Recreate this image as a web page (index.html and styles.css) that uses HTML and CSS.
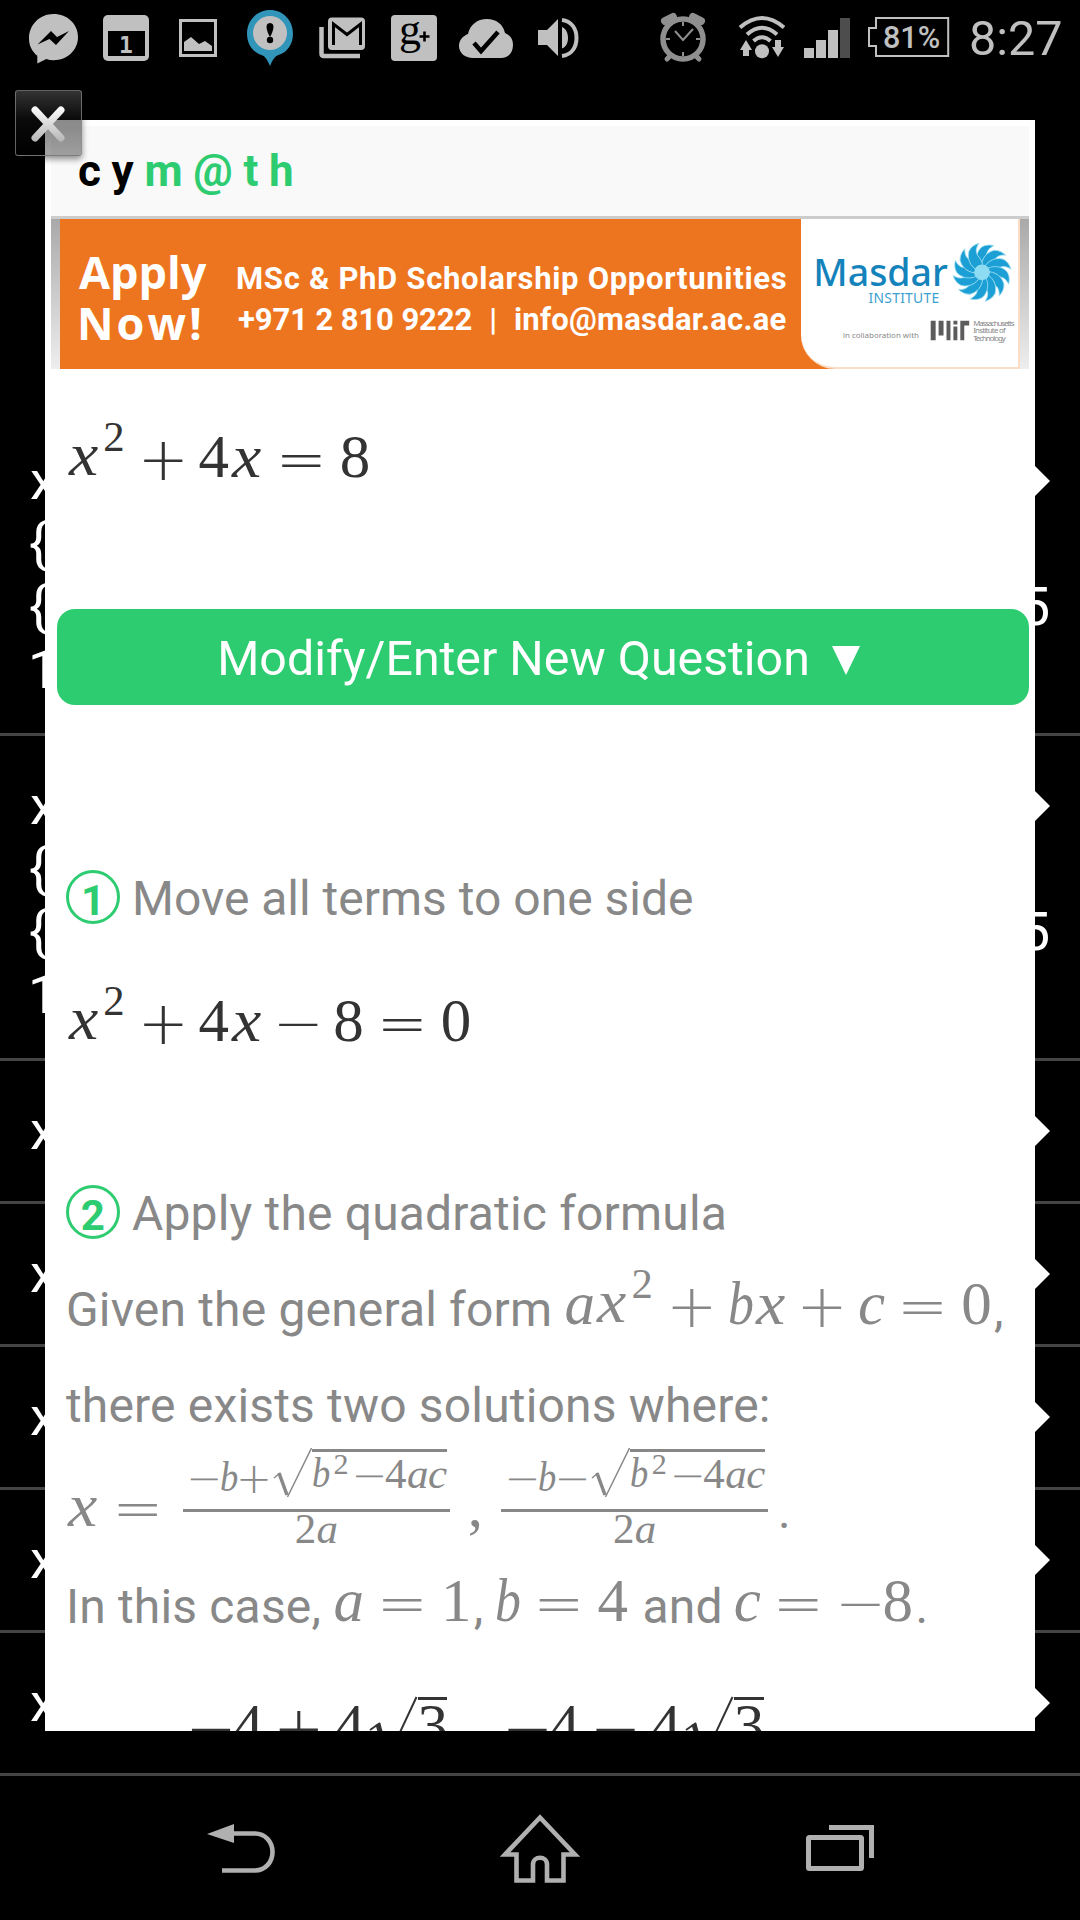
FILE: index.html
```html
<!DOCTYPE html>
<html lang="en">
<head>
    <meta charset="UTF-8">
    <meta name="viewport" content="width=device-width, initial-scale=1.0">
    <title>Cymath</title>
    <link rel="stylesheet" href="styles.css">
</head>
<body>
    <div class="status-bar">
        <div class="notifications">
            <svg viewBox="18 0 72 75"><path d="M53.500 14C39.500 14 29 25 29 38.500c0 7.500 3.200 13 8.300 17.300V63.500l9-4.500c2.300.800 4.700 1.200 7.200 1.200C67.500 60.200 78 50 78 37S67.500 14 53.500 14z" fill="#c0c0c0"/><path d="M37.500 44.500 51 31l6 6 12-6-13 14-6.500-6z" fill="#000"/></svg>
            <svg viewBox="90 0 72 75"><rect x="103" y="15" width="46" height="46" rx="5" fill="#c0c0c0"/><path d="M108 31h37v25h-37z" fill="#000"/><text x="126" y="53" class="cal-day">1</text></svg>
            <svg viewBox="162 0 72 75"><path d="M180.500 20.500h35v35h-35z" fill="none" stroke="#c0c0c0" stroke-width="3"/><path d="M184 51V42l7-5 8 7 6-3 7 5v5z" fill="#c0c0c0"/></svg>
            <svg viewBox="234 0 72 75"><path d="M270 10c-13 0-23 10.500-23 23.500 0 11 6 19 14.500 21.500 3 1 5 3 8.500 11 3.500-8 5.500-10 8.500-11 8.500-2.500 14.500-10.500 14.500-21.500C293 20.500 283 10 270 10z" fill="#3095b9"/><ellipse cx="270" cy="33" rx="17" ry="17" fill="#c0c0c0"/><path d="M270 23c-6 0-3 9 0 14 3-5 6-14 0-14z" fill="#000"/><circle cx="270" cy="40" r="3.200" fill="#000"/></svg>
            <svg viewBox="306 0 72 75"><rect x="328" y="17.500" width="37" height="32.500" rx="4" fill="#c0c0c0"/><path d="M333.500 45V24l13.500 10.500L360.500 24v21" fill="none" stroke="#000" stroke-width="3"/><path d="M321.500 27v26.500q0 2.500 2.500 2.500h36" fill="none" stroke="#c0c0c0" stroke-width="4.500"/></svg>
            <svg viewBox="378 0 72 75"><rect x="391" y="15" width="46" height="46" rx="4" fill="#c0c0c0"/><text x="399" y="44" class="gplus">g</text><path d="M419.500 36.500h10M424.500 31.500v10" stroke="#000" stroke-width="2.600"/></svg>
            <svg viewBox="450 0 72 75"><path d="M473 58c-8 0-14-5-14-12 0-6 4-10 9-12 2-9 9-15 19-15 9 0 16 5 18 14 5 2 8 6 8 12 0 8-5 13-12 13z" fill="#c0c0c0"/><path d="M474 43l7 8 17-19" fill="none" stroke="#000" stroke-width="4.500"/></svg>
            <svg viewBox="522 0 72 75"><path d="M538 30h9l11-11v37l-11-11h-9zM562 27c4 1.500 6 6 6 11s-2 9-6 10.500z" fill="#c0c0c0"/><path d="M562 20c9 1 14.500 8 14.500 18S571 55 562 56" fill="none" stroke="#c0c0c0" stroke-width="4"/></svg>
        </div>
        <div class="system">
            <svg viewBox="648 0 72 75"><g fill="none" stroke="#8f8f8f"><circle cx="683" cy="39" r="20" stroke-width="5.500"/><path d="M665 21l8-4M701 21l-8-4" stroke-width="8" stroke-linecap="round"/><path d="M669 57l-2 2M697 57l2 2" stroke-width="5" stroke-linecap="round"/><path d="M683 22v4M683 52v4M666 39h4M696 39h4M675 31l8 9 10-11" stroke-width="2"/></g></svg>
            <svg viewBox="720 0 78 75"><g fill="none" stroke="#c0c0c0" stroke-width="4"><path d="M740 27.500Q762 8.500 784 27.500M747 34.500Q762 21 777 34.500M753.500 41Q762 33.500 770.500 41"/></g><circle cx="762" cy="51.300" r="7" fill="#c0c0c0"/><path d="M746 40l6 10h-3v6h-6v-6h-3zM778 57l6-10h-3v-7h-6v7h-3z" fill="#c0c0c0"/></svg>
            <svg viewBox="798 0 60 75"><path d="M804 48h10v10h-10zM816 40h10v18h-10zM828 30h10v28h-10z" fill="#c0c0c0"/><path d="M840 18h10v40h-10z" fill="#4d4d4d"/></svg>
            <svg viewBox="858 0 96 75"><path d="M876 18h72.200v38H876V46h-7V28h7z" fill="none" stroke="#c0c0c0" stroke-width="2"/><text x="883" y="48" class="battery">81%</text></svg>
            <span class="time">8:27</span>
        </div>
    </div>

    <ul class="history">
        <li class="tall">
            <div><span>x</span><svg class="arrow"><path d="M0 0 15 15 0 30z"/></svg></div>
            <div><span class="brace">{</span></div>
            <div><span class="brace">{</span><span>5</span></div>
            <div><span class="one">1</span></div>
        </li>
        <li class="tall">
            <div><span>x</span><svg class="arrow"><path d="M0 0 15 15 0 30z"/></svg></div>
            <div><span class="brace">{</span></div>
            <div><span class="brace">{</span><span>5</span></div>
            <div><span class="one">1</span></div>
        </li>
        <li><div><span>x</span><svg class="arrow"><path d="M0 0 15 15 0 30z"/></svg></div></li>
        <li><div><span>x</span><svg class="arrow"><path d="M0 0 15 15 0 30z"/></svg></div></li>
        <li><div><span>x</span><svg class="arrow"><path d="M0 0 15 15 0 30z"/></svg></div></li>
        <li><div><span>x</span><svg class="arrow"><path d="M0 0 15 15 0 30z"/></svg></div></li>
        <li><div><span>x</span><svg class="arrow"><path d="M0 0 15 15 0 30z"/></svg></div></li>
    </ul>

    <div class="nav-bar">
        <svg viewBox="200 1776 80 144"><path d="M207 1834l27-10v19z" fill="#b0b0b0"/><path d="M232 1833.500h23c10 0 17.500 8 17.500 18.500S265 1870.500 255 1870.500h-33" fill="none" stroke="#b0b0b0" stroke-width="4.600"/></svg>
        <svg viewBox="500 1776 80 144"><path d="M540 1817.500 505 1854.500h11.500v26H533v-16c0-9 14-9 14 0v16h16.500v-26H575z" fill="none" stroke="#b0b0b0" stroke-width="4.600"/></svg>
        <svg viewBox="800 1776 80 144"><g fill="none" stroke="#b0b0b0" stroke-width="5"><rect x="808.500" y="1837.500" width="53" height="31" rx="1"/><path d="M829 1827.500h42.500V1858"/></g></svg>
    </div>

    <div class="popup">
        <div class="logo">cy<span>m@th</span></div>
        <div class="ad">
            <div class="ad-main">
                <div class="ad-apply">Apply<br><span>Now!</span></div>
                <div class="ad-text">
                    <div class="ad-title">MSc &amp; PhD Scholarship Opportunities</div>
                    <div class="ad-contact"><span>+971 2 810 9222</span><span>|</span><span class="mail">info@masdar.ac.ae</span></div>
                </div>
            </div>
            <svg class="ad-logo" viewBox="801 219 219 150">
                <defs><path id="blade" d="M984 273c-7-7-8-18-1-25 4-3 9-3 13-2-6 3-8 7-7 12 1 6-1 11-5 15z"/></defs>
                <text x="813" y="287" class="masdar">Masdar</text>
                <text x="869" y="304" class="institute">INSTITUTE</text>
                <g fill="#1b9fd4" stroke="#a5e0f3" stroke-width=".8">
                    <use href="#blade"/>
                    <use href="#blade" transform="rotate(30 984 273)"/>
                    <use href="#blade" transform="rotate(60 984 273)"/>
                    <use href="#blade" transform="rotate(90 984 273)"/>
                    <use href="#blade" transform="rotate(120 984 273)"/>
                    <use href="#blade" transform="rotate(150 984 273)"/>
                    <use href="#blade" transform="rotate(180 984 273)"/>
                    <use href="#blade" transform="rotate(210 984 273)"/>
                    <use href="#blade" transform="rotate(240 984 273)"/>
                    <use href="#blade" transform="rotate(270 984 273)"/>
                    <use href="#blade" transform="rotate(300 984 273)"/>
                    <use href="#blade" transform="rotate(330 984 273)"/>
                </g>
                <circle cx="984" cy="273" r="8" fill="#8edcf3"/>
                <text x="843" y="340" class="tiny" textLength="77">in collaboration with</text>
                <path d="M932 322h5v20h-5zM940 322h5v15h-5zM948 322h4v20h-4zM955 322h4v4h-4zM955 328h4v14h-4zM962 322h4v20h-4zM962 322h9v5h-9z" fill="#5c5c5c"/>
                <text x="975" y="327" class="tiny" textLength="42">Massachusetts</text>
                <text x="975" y="335" class="tiny" textLength="33">Institute of</text>
                <text x="975" y="343" class="tiny" textLength="33">Technology</text>
            </svg>
        </div>

        <p class="dark problem"><span class="math"><i class="x base">x</i><span class="sup">2</span><b class="bin">+</b><s>4</s><i class="x">x</i><b class="rel">=</b><s>8</s></span></p>

        <div class="button">Modify/Enter New Question <svg width="28" height="29"><path d="M0 0h28L14 29z" fill="#fff"/></svg></div>

        <p class="step-1"><span class="num">1</span>Move all terms to one side</p>
        <p class="dark equation"><span class="math"><i class="x base">x</i><span class="sup">2</span><b class="bin">+</b><s>4</s><i class="x">x</i><b class="bin">−</b><s>8</s><b class="rel">=</b><s>0</s></span></p>

        <p class="step-2 text"><span class="num">2</span>Apply the quadratic formula</p>
        <p class="text">Given the general form <span class="math inline"><i class="a">a</i><i class="x base">x</i><span class="sup">2</span><b class="bin">+</b><i class="b">b</i><i class="x">x</i><b class="bin">+</b><i class="c">c</i><b class="rel">=</b><s>0</s></span>,</p>
        <p class="text">there exists two solutions where:</p>
        <p class="solutions"><span class="math raised"><i class="x">x</i><b class="rel">=</b></span><span class="math frac first"><span class="top"><b>−</b><i class="b">b</i><b>+</b><svg class="root" viewBox="0 0 42 51"><path d="M4 31l6-5M41.500 1 17.500 50" stroke-width="1.500"/><path d="M9 26l8 22" stroke-width="3.500"/></svg><span class="radicand"><i class="b base">b</i><span class="sup">2</span><b>−</b><s>4</s><i class="a">a</i><i class="c">c</i></span></span><span class="bottom"><s>2</s><i class="a">a</i></span></span><span class="math comma">,</span><span class="math frac"><span class="top"><b>−</b><i class="b">b</i><b>−</b><svg class="root" viewBox="0 0 42 51"><path d="M4 31l6-5M41.500 1 17.500 50" stroke-width="1.500"/><path d="M9 26l8 22" stroke-width="3.500"/></svg><span class="radicand"><i class="b base">b</i><span class="sup">2</span><b>−</b><s>4</s><i class="a">a</i><i class="c">c</i></span></span><span class="bottom"><s>2</s><i class="a">a</i></span></span><span class="stop">.</span></p>
        <p class="text">In this case, <span class="math inline"><i class="a">a</i><b class="rel">=</b><s>1</s></span>, <span class="math inline near"><i class="b">b</i><b class="rel">=</b><s>4</s></span> and <span class="math inline near"><i class="c">c</i><b class="rel">=</b><b>−</b><s>8</s></span>.</p>
        <p class="dark result"><span class="math"><b>−</b><s>4</s><b class="bin">+</b><s>4</s><svg class="big-root" viewBox="0 0 54 65"><path d="M6 34l10-7M52.500 1 23 64" stroke-width="2"/><path d="M14 28l9 34" stroke-width="5"/></svg><span class="big-radicand"><s>3</s></span></span><span class="math second"><b>−</b><s>4</s><b class="bin">−</b><s>4</s><svg class="big-root" viewBox="0 0 54 65"><path d="M6 34l10-7M52.500 1 23 64" stroke-width="2"/><path d="M14 28l9 34" stroke-width="5"/></svg><span class="big-radicand"><s>3</s></span></span></p>
    </div>

    <div class="close">
        <svg viewBox="0 0 34 36"><defs><linearGradient id="steel" gradientUnits="userSpaceOnUse" x1="0" y1="0" x2="0" y2="36"><stop offset="0" stop-color="#fff"/><stop offset="1" stop-color="#b5b5b5"/></linearGradient></defs><path d="M4 4l26 28M30 4L4 32" stroke="url(#steel)" stroke-width="7" stroke-linecap="round"/></svg>
    </div>
</body>
</html>
```
FILE: styles.css
```css
* {
    box-sizing: border-box;
}

body {
    margin: 0;
    width: 1080px;
    height: 1920px;
    position: relative;
    overflow: hidden;
    background: #000;
    font-family: Roboto, sans-serif;
    color: #888;
}

svg {
    flex: none;
}

/* Status bar */
.status-bar {
    display: flex;
    justify-content: space-between;
    height: 75px;
    padding-left: 18px;
}

.notifications,
.system {
    display: flex;
}

.notifications svg {
    width: 72px;
    height: 75px;
}

.system {
    width: 432px;
}

.system svg {
    height: 75px;
}

.time {
    margin-left: 15px;
    font-size: 48.5px;
    line-height: 77px;
    color: #c0c0c0;
}

.cal-day {
    font: bold 23px "DejaVu Sans Mono", monospace;
    fill: #c0c0c0;
    text-anchor: middle;
}

.gplus {
    font: 44px "Liberation Serif", serif;
    fill: #000;
}

.battery {
    font: 500 30.5px Roboto, sans-serif;
    fill: #c0c0c0;
}

/* List behind the popup */
.history {
    list-style: none;
    margin: 336px 0 0;
    padding: 0;
    color: #fff;
    font-size: 54px;
    line-height: 63px;
}

.history li {
    height: 143px;
    padding: 38px 30px 0;
    border-bottom: 3px solid #444;
}

.history .tall {
    height: 325px;
}

.history div {
    display: flex;
    justify-content: space-between;
    align-items: center;
    height: 63px;
}

.history .brace {
    margin-left: -1px;
}

.history .one {
    margin-left: -2px;
}

.arrow {
    width: 15px;
    height: 30px;
    fill: #fff;
}

.nav-bar {
    display: flex;
    justify-content: space-between;
    height: 144px;
    padding: 0 200px;
}

.nav-bar svg {
    width: 80px;
    height: 144px;
}

/* Popup */
.popup {
    position: absolute;
    left: 45px;
    top: 120px;
    width: 990px;
    height: 1611px;
    padding: 6px;
    overflow: hidden;
    background: #fff;
}

.close {
    position: absolute;
    left: 15px;
    top: 90px;
    width: 67px;
    height: 66px;
    padding: 15px 15px;
    border: 1.5px solid rgba(140, 140, 140, 0.7);
    border-radius: 3px;
    background: linear-gradient(rgba(60, 60, 60, 0.85), rgba(20, 20, 20, 0.5) 45%, rgba(0, 0, 0, 0.36));
    box-shadow: 0 3px 6px rgba(0, 0, 0, 0.45);
}

.close svg {
    display: block;
    width: 34px;
    height: 36px;
}

.logo {
    height: 93px;
    padding-left: 27px;
    border-bottom: 3px solid #ccc;
    background: #f9f9f9;
    color: #000;
    font-size: 44px;
    font-weight: bold;
    letter-spacing: 10.7px;
    line-height: 91px;
}

.logo span {
    color: #2ecc71;
}

/* Banner ad */
.ad {
    display: flex;
    height: 150px;
    padding: 0 9px;
    background: linear-gradient(#a9a9a9, #eee);
}

.ad-main {
    display: flex;
    width: 741px;
    padding-left: 19px;
    background: #ee751f;
    color: #fff;
    font-weight: bold;
    white-space: nowrap;
}

.ad-apply {
    width: 157px;
    padding-top: 27px;
    font-family: "Open Sans", sans-serif;
    font-size: 45px;
    line-height: 51px;
}

.ad-apply span {
    margin-left: -2px;
    letter-spacing: 3px;
}

.ad-text {
    padding-top: 39px;
    font-size: 31px;
    line-height: 41px;
    letter-spacing: 0.7px;
}

.ad-contact {
    display: flex;
    gap: 17px;
    padding-left: 2px;
    letter-spacing: -0.1px;
}

.ad-contact .mail {
    letter-spacing: 0.25px;
}

.ad-logo {
    width: 219px;
    height: 150px;
    border-right: 2px solid #fbdcc4;
    border-bottom: 2px solid #fbdcc4;
    border-bottom-left-radius: 34px;
    background: #fff;
    box-shadow: -17px 17px 0 17px #ee751f;
    clip-path: inset(0);
}

.masdar {
    font: 500 38px "Noto Sans", sans-serif;
    fill: #1583bb;
}

.institute {
    font: 14px "Noto Sans", sans-serif;
    letter-spacing: 0.3px;
    fill: #3aa0cf;
}

.tiny {
    font: 8px "Noto Sans", sans-serif;
    fill: #888;
}

/* Content */
.popup p {
    height: 96px;
    margin: 0;
    padding-left: 15px;
    font-size: 48px;
    line-height: 96px;
    white-space: nowrap;
}

.popup .text {
    letter-spacing: 0.17px;
}

.popup .problem {
    margin-top: 44px;
}

.button {
    height: 96px;
    margin: 100px 0 0 6px;
    padding-right: 9px;
    border-radius: 18px;
    background: #2ecc71;
    color: #fff;
    font-size: 48.3px;
    line-height: 99px;
    text-align: center;
}

.button svg {
    margin-left: 10px;
}

.popup .step-1 {
    margin-top: 146px;
}

.popup .equation {
    margin-top: 30px;
}

.popup .step-2 {
    margin-top: 93px;
}

.popup .solutions {
    height: 114px;
    margin-top: -9px;
}

.popup .result {
    margin-top: 27px;
    padding-left: 137px;
}

.popup .dark {
    color: #333;
}

.num {
    display: inline-block;
    width: 54px;
    height: 54px;
    margin-right: 12px;
    padding-top: 4px;
    border: 3px solid #2ecc71;
    border-radius: 50%;
    color: #2ecc71;
    font-size: 42px;
    font-weight: bold;
    line-height: 48px;
    text-align: center;
}

/* Formulas */
.math {
    font-family: "Liberation Serif", serif;
    font-size: 61px;
    line-height: 0;
    letter-spacing: 0;
}

.math i,
.math b,
.math s,
.sup {
    display: inline-block;
    line-height: 0;
    text-decoration: none;
}

.math s {
    width: 0.481em;
    text-indent: -0.01em;
}

.math b {
    width: 0.749em;
    text-indent: -0.045em;
    font-family: "DejaVu Sans", sans-serif;
    font-weight: 200;
    vertical-align: -0.05em;
}

.math .bin {
    margin: 0 0.2136em;
}

.math .rel {
    margin: 0 0.2675em;
}

.math .x {
    width: 0.55em;
    text-indent: 0.045em;
    transform: scaleX(1.08);
    transform-origin: 0 0;
}

.math .a {
    width: 0.509em;
    text-indent: 0.02em;
}

.math .b {
    width: 0.413em;
    transform: scaleX(0.85);
    transform-origin: 0 0;
}

.math .c {
    width: 0.4165em;
}

.math .base {
    vertical-align: 0.03em;
}

.sup {
    width: 0.655em;
    padding-left: 0.085em;
    font-size: 0.7em;
    vertical-align: 0.61em;
}

.inline {
    margin: 0 3px 0 -1px;
    vertical-align: 2px;
}

.near {
    margin-left: -1px;
}

.raised {
    margin-left: -1px;
    vertical-align: 2px;
}

.frac {
    display: inline-flex;
    flex-direction: column;
    width: 267px;
    font-size: 43px;
    vertical-align: 37px;
}

.first {
    margin-left: 6px;
}

.top {
    height: 64px;
    padding-left: 5px;
    line-height: 64px;
}

.bottom {
    height: 36px;
    border-top: 3px solid #888;
    line-height: 33px;
    text-align: center;
}

.root {
    width: 42px;
    height: 51px;
    vertical-align: -7px;
}

.root path,
.big-root path {
    fill: none;
    stroke: currentColor;
}

.radicand {
    display: inline-block;
    width: 135px;
    border-top: 3px solid #888;
    line-height: 43px;
    vertical-align: 3px;
}

.radicand .sup {
    width: 0.78em;
    padding-left: 0.12em;
    vertical-align: 0.46em;
}

.comma {
    margin: 0 18px;
    vertical-align: 2px;
}

.stop {
    margin-left: 10px;
}

.big-root {
    width: 54px;
    height: 65px;
    vertical-align: -15px;
}

.big-radicand {
    display: inline-block;
    border-top: 3px solid #333;
    line-height: 51px;
}

.second {
    margin-left: 57px;
}
```
